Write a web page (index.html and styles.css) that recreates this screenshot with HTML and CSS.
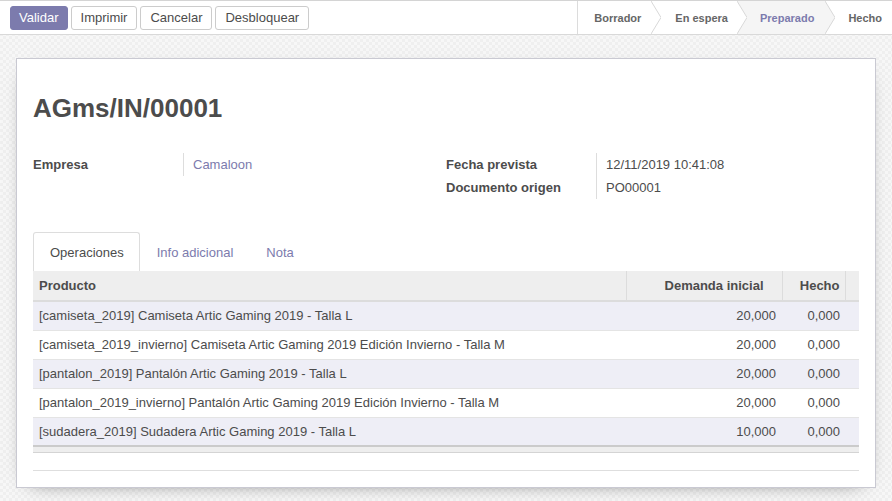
FILE: index.html
```html
<!DOCTYPE html>
<html lang="es">
<head>
<meta charset="utf-8">
<title>AGms/IN/00001</title>
<link rel="stylesheet" href="styles.css">
</head>
<body>
<div class="topbar">
  <div class="actions">
    <button class="btn btn-primary">Validar</button>
    <button class="btn">Imprimir</button>
    <button class="btn">Cancelar</button>
    <button class="btn">Desbloquear</button>
  </div>
  <div class="statusbar">
    <span class="step s1">Borrador</span>
    <svg class="sep" viewBox="0 0 10 34" preserveAspectRatio="none"><polygon class="r" points="0,0 10,0 10,34 0,34 10,17"/><polygon class="l" points="0,0 10,17 0,34"/><polyline class="line" points="0,0 10,17 0,34"/></svg>
    <span class="step s2">En espera</span>
    <svg class="sep to-active" viewBox="0 0 10 34" preserveAspectRatio="none"><polygon class="r" points="0,0 10,0 10,34 0,34 10,17"/><polygon class="l" points="0,0 10,17 0,34"/><polyline class="line" points="0,0 10,17 0,34"/></svg>
    <span class="step s3 active">Preparado</span>
    <svg class="sep from-active" viewBox="0 0 10 34" preserveAspectRatio="none"><polygon class="r" points="0,0 10,0 10,34 0,34 10,17"/><polygon class="l" points="0,0 10,17 0,34"/><polyline class="line" points="0,0 10,17 0,34"/></svg>
    <span class="step s4">Hecho</span>
  </div>
</div>
<main class="page">
  <section class="sheet">
    <h1 class="title">AGms/IN/00001</h1>
    <div class="groups">
      <div class="group">
        <div class="field"><span class="label">Empresa</span><span class="value link">Camaloon</span></div>
      </div>
      <div class="group">
        <div class="field"><span class="label">Fecha prevista</span><span class="value">12/11/2019 10:41:08</span></div>
        <div class="field"><span class="label">Documento origen</span><span class="value">PO00001</span></div>
      </div>
    </div>
    <div class="tabs">
      <span class="tab active">Operaciones</span>
      <span class="tab">Info adicional</span>
      <span class="tab">Nota</span>
    </div>
    <table class="grid">
      <thead>
        <tr><th class="c-prod">Producto</th><th class="c-num">Demanda inicial</th><th class="c-hecho">Hecho</th><th class="c-pad"></th></tr>
      </thead>
      <tbody>
        <tr><td>[camiseta_2019] Camiseta Artic Gaming 2019 - Talla L</td><td class="num">20,000</td><td class="num2">0,000</td><td></td></tr>
        <tr><td>[camiseta_2019_invierno] Camiseta Artic Gaming 2019 Edición Invierno - Talla M</td><td class="num">20,000</td><td class="num2">0,000</td><td></td></tr>
        <tr><td>[pantalon_2019] Pantalón Artic Gaming 2019 - Talla L</td><td class="num">20,000</td><td class="num2">0,000</td><td></td></tr>
        <tr><td>[pantalon_2019_invierno] Pantalón Artic Gaming 2019 Edición Invierno - Talla M</td><td class="num">20,000</td><td class="num2">0,000</td><td></td></tr>
        <tr><td>[sudadera_2019] Sudadera Artic Gaming 2019 - Talla L</td><td class="num">10,000</td><td class="num2">0,000</td><td></td></tr>
      </tbody>
      <tfoot>
        <tr><td colspan="4"></td></tr>
      </tfoot>
    </table>
    <div class="sheet-end"></div>
  </section>
</main>
</body>
</html>
```
FILE: styles.css
```css
* { box-sizing: border-box; }
html, body { margin: 0; padding: 0; }
body {
  font-family: "Liberation Sans", Arial, sans-serif;
  font-size: 13px;
  color: #4c4c4c;
  width: 892px;
  height: 501px;
  overflow: hidden;
  background-color: #f3f3f3;
  background-image: repeating-conic-gradient(#efefef 0 25%, #f7f7f7 0 50%);
  background-size: 6px 6px;
}
.topbar {
  height: 35px;
  background: #fff;
  border-top: 1px solid #d4d4d4;
  border-bottom: 1px solid #d9d9d9;
  display: flex;
  justify-content: space-between;
  align-items: stretch;
}
.actions {
  display: flex;
  gap: 3px;
  padding: 5px 0 0 10px;
  align-items: flex-start;
}
.btn {
  font-family: inherit;
  font-size: 13px;
  height: 24px;
  padding: 0 9px;
  border: 1px solid #ccc;
  border-radius: 3px;
  background: #fff;
  color: #4c4c4c;
  line-height: 22px;
}
.btn-primary {
  background: #7c7bad;
  border-color: #7c7bad;
  color: #fff;
  padding: 0 8px;
}
.statusbar {
  display: flex;
  border-left: 1px solid #dcdcdc;
}
.step {
  display: flex;
  align-items: center;
  font-size: 11px;
  font-weight: bold;
  color: #666;
  background: #fff;
  white-space: nowrap;
}
.s1 { padding: 0 10px 0 16px; }
.s2 { padding: 0 9px 0 14px; }
.s3 { padding: 0 11px 0 13px; }
.s4 { padding: 0 10px 0 13px; }
.step.active { background: #f5f5f5; color: #7c7bad; }
.sep {
  width: 10px;
  height: 33px;
  flex: none;
  display: block;
}
.sep .l, .sep .r { fill: #fff; }
.sep.to-active .r { fill: #f5f5f5; }
.sep.from-active .l { fill: #f5f5f5; }
.sep .line { fill: none; stroke: #d8d8d8; stroke-width: 1; vector-effect: non-scaling-stroke; }
.page {
  padding: 23px 16px 0 16px;
}
.sheet {
  background: #fff;
  border: 1px solid #c9c9d2;
  box-shadow: 0 5px 20px -15px #000;
  height: 430px;
  padding: 33px 16px 0 16px;
}
.title {
  margin: 0;
  font-size: 26px;
  line-height: 32px;
  font-weight: bold;
  color: #4c4c4c;
}
.groups {
  display: flex;
  margin-top: 29px;
}
.group { width: 413px; }
.field {
  display: flex;
  height: 23px;
  line-height: 23px;
}
.label {
  width: 150px;
  font-weight: bold;
  color: #4c4c4c;
}
.value {
  border-left: 1px solid #ddd;
  padding-left: 9px;
  color: #4c4c4c;
}
.link { color: #7c7bad; }
.tabs {
  display: flex;
  margin-top: 33px;
  height: 39px;
}
.tab {
  padding: 0 15px 0 16px;
  line-height: 39px;
  color: #7c7bad;
  border: 1px solid transparent;
  border-bottom: none;
  border-radius: 3px 3px 0 0;
}
.tab.active {
  color: #4c4c4c;
  border-color: #ddd;
  background: #fff;
}
.grid {
  width: 826px;
  border-collapse: collapse;
  table-layout: fixed;
}
.grid th {
  height: 30px;
  background: #eee;
  font-weight: bold;
  text-align: left;
  padding: 0 6px;
  border-bottom: 2px solid #dcdcdc;
}
.c-prod { width: 593px; }
.grid th.c-num { width: 156px; text-align: right; padding-right: 18px; border-left: 1px solid #dcdcdc; }
.grid th.c-hecho { width: 63px; text-align: right; padding-right: 5px; border-left: 1px solid #dcdcdc; border-right: 1px solid #dcdcdc; }
.c-pad { width: 14px; }
.grid td {
  height: 29px;
  padding: 0 6px;
  border-top: 1px solid #e4e4e4;
  white-space: nowrap;
}
.grid tbody tr:nth-child(odd) td { background: #eeeef6; }
.grid td.num { text-align: right; padding-right: 6px; }
.grid td.num2 { text-align: right; padding-right: 5px; }
.grid tbody tr:last-child td { border-bottom: 2px solid #cbcbcb; }
.grid tfoot td {
  height: 6px;
  padding: 0;
  background: #eee;
  border-top: none;
  border-bottom: 1px solid #d4d4d4;
}
.sheet-end {
  height: 18px;
  border-bottom: 1px solid #dedede;
}
```
